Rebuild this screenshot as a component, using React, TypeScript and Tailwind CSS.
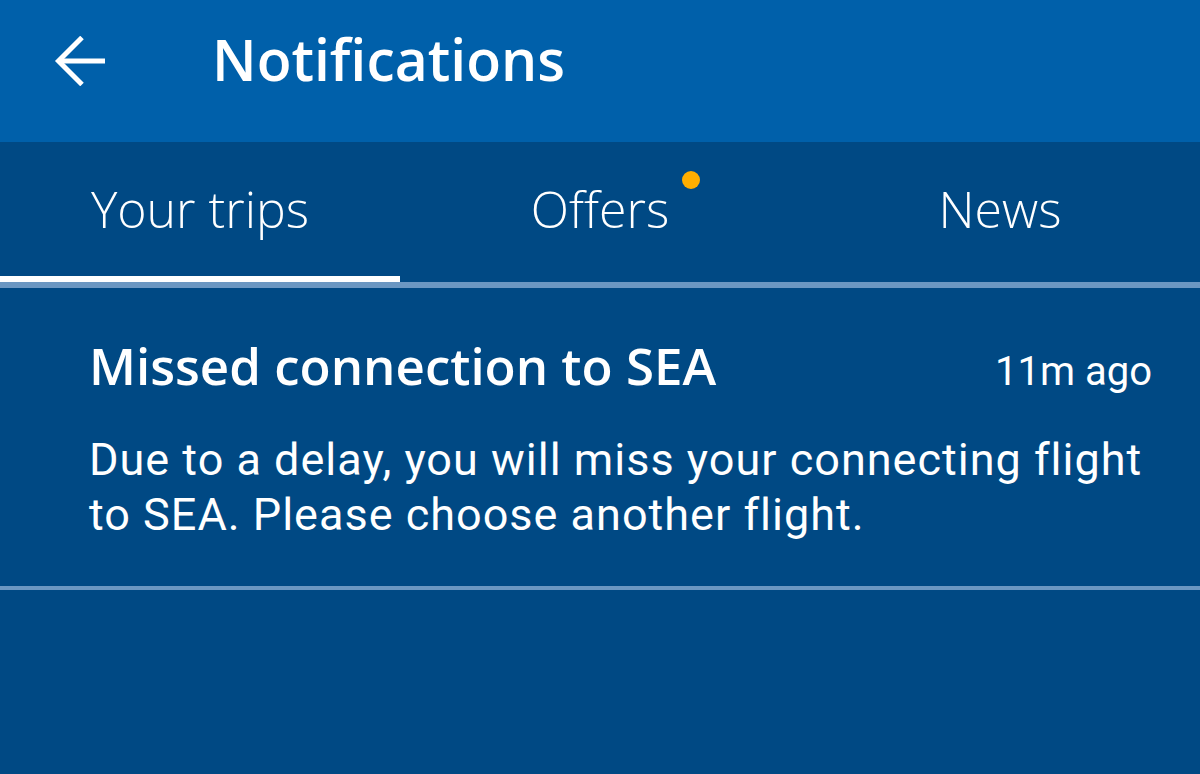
import React from "react";

function BackArrow() {
  return (
    <svg width="56" height="50" viewBox="0 0 56 50" fill="none">
      <path d="M7 25H53" stroke="white" strokeWidth="5" />
      <path d="M30 1.5L6.5 25L30 48.5" stroke="white" strokeWidth="5" strokeLinejoin="miter" />
    </svg>
  );
}

export default function App() {
  return (
    <div className="w-[1200px] h-[774px] bg-[#004984] overflow-hidden flex flex-col">
      <header className="h-[142px] shrink-0 bg-[#0060aa] flex items-center pb-[20px]">
        <div className="ml-[52px] w-[56px] flex items-center">
          <BackArrow />
        </div>
        <h1
          className="ml-[104px] text-white text-[57px] leading-[70px] font-semibold -mt-[4px]"
          style={{ fontFamily: '"Open Sans", sans-serif' }}
        >
          Notifications
        </h1>
      </header>

      <nav className="h-[140px] shrink-0 grid grid-cols-3 text-white" style={{ fontFamily: '"Open Sans", sans-serif' }}>
        {[
          { label: "Your trips", active: true, dot: false },
          { label: "Offers", active: false, dot: true },
          { label: "News", active: false, dot: false },
        ].map((t) => (
          <div key={t.label} className="relative flex items-center justify-center">
            <span className="relative text-[50px] leading-[60px] font-light -mt-[6px]">
              {t.label}
              {t.dot && (
                <span className="absolute left-full ml-[13px] top-[-8px] w-[18px] h-[18px] rounded-full bg-[#ffae00]" />
              )}
            </span>
            {t.active && <div className="absolute left-0 right-0 bottom-0 h-[6px] bg-white" />}
          </div>
        ))}
      </nav>
      <div className="h-[6px] shrink-0 bg-[#6b97c2]" />

      <section className="pl-[89px] pt-[47px] pb-[44px] text-white">
        <div className="flex items-baseline justify-between pr-[48px]">
          <h2
            className="text-[51px] leading-[60px] font-semibold"
            style={{ fontFamily: '"Open Sans", sans-serif' }}
          >
            Missed connection to SEA
          </h2>
          <span className="text-[40px] leading-[60px]" style={{ fontFamily: "Roboto, sans-serif" }}>
            11m ago
          </span>
        </div>
        <p
          className="mt-[30px] pr-[16px] text-[45px] leading-[55px] tracking-[1px]"
          style={{ fontFamily: "Roboto, sans-serif" }}
        >
          Due to a delay, you will miss your connecting flight to SEA. Please choose another flight.
        </p>
      </section>
      <div className="h-[4px] shrink-0 bg-[#6b97c2]" />
    </div>
  );
}
